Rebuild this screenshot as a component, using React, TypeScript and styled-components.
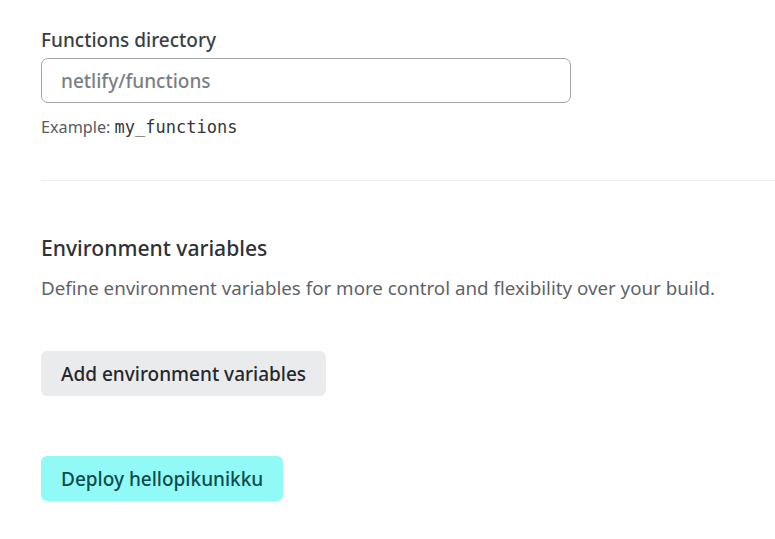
import React from 'react';
import styled, { createGlobalStyle } from 'styled-components';

const GlobalStyle = createGlobalStyle`
  html, body {
    margin: 0;
    padding: 0;
    background: #ffffff;
  }
  body {
    font-family: 'Noto Sans', 'Open Sans', sans-serif;
    color: #2e3135;
  }
`;

const App = () => {
  return (
    <>
      <GlobalStyle />
      <Page>
        <FieldBlock>
          <Label htmlFor="functions-dir">Functions directory</Label>
          <TextInput id="functions-dir" placeholder="netlify/functions" />
          <Hint>
            Example: <code>my_functions</code>
          </Hint>
        </FieldBlock>
        <Divider />
        <Section>
          <SectionTitle>Environment variables</SectionTitle>
          <SectionText>
            Define environment variables for more control and flexibility over
            your build.
          </SectionText>
          <Button type="button">Add environment variables</Button>
        </Section>
        <Button type="button" $primary>
          Deploy hellopikunikku
        </Button>
      </Page>
    </>
  );
};

const Page = styled.main`
  padding: 28px 0 0 41px;
  display: flex;
  flex-direction: column;
  align-items: flex-start;
`;

const FieldBlock = styled.div`
  display: flex;
  flex-direction: column;
  gap: 6px;
`;

const Label = styled.label`
  font-size: 19px;
  font-weight: 500;
  color: #3b3f44;
  line-height: 24px;
`;

const TextInput = styled.input`
  box-sizing: border-box;
  width: 530px;
  height: 45px;
  padding: 0 19px;
  border: 1px solid #a3a4a6;
  border-radius: 7px;
  font-family: inherit;
  font-size: 19px;
  font-weight: 500;
  color: #2e3135;
  outline: none;

  &::placeholder {
    color: #7b7f85;
  }
`;

const Hint = styled.p`
  margin: 8px 0 0;
  height: 20px;
  font-size: 16.2px;
  color: #575b60;
  line-height: 20px;

  code {
    font-family: 'DejaVu Sans Mono', 'Liberation Mono', monospace;
    font-size: 17px;
    line-height: 1;
    color: #33363b;
  }
`;

const Divider = styled.hr`
  align-self: stretch;
  margin: 43px 0 0;
  border: none;
  border-top: 1px solid #eceef0;
`;

const Section = styled.section`
  margin-top: 53px;
  display: flex;
  flex-direction: column;
  align-items: flex-start;
`;

const SectionTitle = styled.h3`
  margin: 0;
  font-size: 21.1px;
  font-weight: 500;
  line-height: 28px;
  color: #2e3135;
`;

const SectionText = styled.p`
  margin: 13px 0 0;
  font-size: 18.75px;
  line-height: 26px;
  color: #5f6368;
`;

const Button = styled.button<{ $primary?: boolean }>`
  margin-top: ${({ $primary }) => ($primary ? '60px' : '50px')};
  height: 45px;
  padding: 0 20px;
  border: none;
  border-radius: 6px;
  font-family: inherit;
  font-size: 19px;
  font-weight: 500;
  cursor: pointer;
  background: ${({ $primary }) => ($primary ? '#91faf6' : '#e9ebed')};
  color: ${({ $primary }) => ($primary ? '#0c4b4e' : '#24272b')};
`;

export default App;
